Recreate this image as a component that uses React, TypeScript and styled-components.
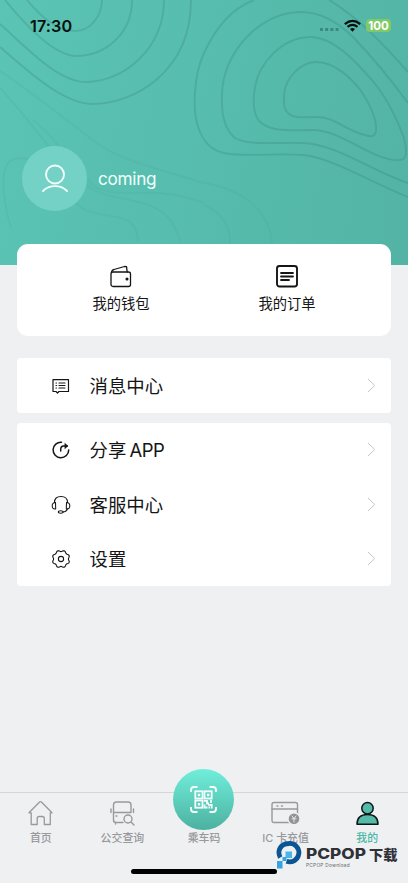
import React from "react";
import styled, { createGlobalStyle } from "styled-components";

const GlobalStyle = createGlobalStyle`
  * { box-sizing: border-box; }
  body { margin: 0; background: #eff0f2; }
  body, button { font-family: Inter, "Noto Sans CJK SC", sans-serif; }
  button { border: 0; padding: 0; background: none; color: inherit; }
  svg { display: block; overflow: visible; flex: none; }
`;

const Screen = styled.div`
  width: 408px;
  height: 883px;
  overflow: hidden;
  display: flex;
  flex-direction: column;
  background: #eff0f2;
  color: #151515;
`;

const Hero = styled.header`
  position: relative;
  height: 265px;
  flex: none;
  background: linear-gradient(100deg, #5bc4b4 0%, #57bdae 45%, #53b4a5 100%);
`;

const Contours = styled.svg`
  position: absolute;
  inset: 0;
  fill: none;
  stroke: #317e78;
  stroke-width: 1.9;
`;

const HeroContent = styled.div`
  position: relative;
`;

const StatusBar = styled.div`
  height: 51px;
  padding: 0 17px 0 30px;
  display: flex;
  align-items: center;
  color: #06110f;
`;

const Clock = styled.time`
  flex: 1;
  font-size: 16.2px;
  font-weight: 600;
  letter-spacing: 0.1px;
`;

const Signal = styled.svg`
  margin-right: 5px;
`;

const Battery = styled.span`
  width: 25px;
  height: 13px;
  margin-left: 5px;
  border-radius: 4px;
  background: #7fca67;
  color: #fff;
  font-size: 11.5px;
  font-weight: 700;
  line-height: 14px;
  text-align: center;
`;

const Profile = styled.div`
  margin: 95px 0 0 22px;
  display: flex;
  align-items: center;
  gap: 11px;
  color: #f2fffc;
  font-size: 17.2px;
  letter-spacing: -0.3px;
`;

const Avatar = styled.div`
  width: 65px;
  height: 65px;
  border-radius: 50%;
  background: #74d1c5;
  display: grid;
  place-items: center;
`;

const Shortcuts = styled.section`
  position: relative;
  height: 92px;
  margin: -21px 17px 0;
  padding: 0 21px;
  border-radius: 11px;
  background: #fff;
  display: grid;
  grid-template-columns: 1fr 1fr;
  flex: none;
`;

const Shortcut = styled.button`
  padding-top: 20px;
  display: flex;
  flex-direction: column;
  align-items: center;
  gap: 6px;
  font-size: 14.3px;
  line-height: 20px;
`;

const Card = styled.section<{ $gap: number }>`
  margin: ${(p) => p.$gap}px 17px 0;
  border-radius: 4px;
  background: #fff;
  flex: none;
`;

const MenuRow = styled.button<{ $height: number }>`
  width: 100%;
  height: ${(p) => p.$height}px;
  padding: 1px 15px 0 34px;
  display: flex;
  align-items: center;
  font-size: 18.4px;
  text-align: left;
`;

const MenuLabel = styled.span`
  flex: 1;
  margin-left: 18.5px;
  line-height: 24px;
  word-spacing: -2px;
`;

const Latin = styled.span`
  letter-spacing: -0.5px;
`;

const TabBar = styled.nav`
  position: relative;
  height: 91px;
  margin-top: auto;
  border-top: 1px solid #d5d6d9;
  display: grid;
  grid-template-columns: repeat(5, 81.6px);
  flex: none;
`;

const Tab = styled.button<{ $active?: boolean }>`
  height: 54px;
  padding-top: 6px;
  display: flex;
  flex-direction: column;
  align-items: center;
  gap: 2.5px;
  color: ${(p) => (p.$active ? "#4cb7a6" : "#98999c")};
  font-size: 10.9px;
  font-weight: 500;
  line-height: 16px;
  white-space: nowrap;
`;

const ScanButton = styled.span`
  width: 61px;
  height: 61px;
  margin-top: -30px;
  margin-bottom: -3px;
  border-radius: 50%;
  background: linear-gradient(#70eedb, #4cb1a0);
  display: grid;
  place-items: center;
  flex: none;
`;

const HomeIndicator = styled.div`
  position: absolute;
  left: 131px;
  bottom: 9px;
  width: 146px;
  height: 5px;
  border-radius: 3px;
  background: #000;
`;

const Watermark = styled.div`
  position: absolute;
  left: 275px;
  top: 46px;
  display: flex;
  gap: 3px;
  color: #303238;
`;

const WatermarkText = styled.div`
  padding-top: 6px;
`;

const Brand = styled.div`
  display: flex;
  align-items: center;
  height: 18px;
`;

const BrandChinese = styled.span`
  margin: -1px 0 0 3px;
  font-family: "Noto Sans CJK SC", sans-serif;
  font-size: 14.2px;
  font-weight: 900;
  line-height: 18px;
`;

const BrandLatin = styled.svg`
  width: 60px;
  height: 18px;
`;

const Tagline = styled.div`
  height: 6px;
  margin-top: -1px;
  font-size: 4.8px;
  line-height: 6px;
  letter-spacing: 0.25px;
  color: #66686d;
`;

const stroke = {
  fill: "none",
  stroke: "currentColor",
  strokeLinecap: "round",
  strokeLinejoin: "round",
} as const;

const HeroPattern = () => (
  <Contours width="408" height="265" viewBox="0 0 408 265">
    <g opacity=".26">
      <path d="M27 0C45 22 60 31 75 31C92 31 102 14 102 0" />
      <path d="M5 0C27 27 55 56 76 56C105 56 132 34 132 0" />
      <path d="M0 24C24 45 57 82 86 82C124 82 164 48 164 0" />
      <path d="M0 47C27 70 63 104 92 104C134 104 191 72 191 0" />
      <path d="M254 0C232 8 216 27 204 53C194 75 191 112 200 132C208 151 222 154 236 154.500C261 156 278 153 303 155C333 158 370 182 408 197" />
      <path d="M408 103C389 77 374 59 354 38C339 23 321 12 301 12C258 12 222 55 222 95C221 117 225 130 235 138C249 146 280 142 302 143C337 144 371 171 408 183" />
      <path d="M309 37C333 36 356 62 372 80C389 100 398 122 404 138C408 153 406 160 400 160C373 162 341 129 312 130C280 131 268 130 259 121C252 112 253 99 255 87C259 63 282 38 309 37Z" />
      <path d="M317 62C335 62 353 80 361 91C369 103 377 119 376 131C375 137 371 137 365 135C346 131 335 117 318 117C304 117 294 119 288 113C283 109 284 101 284 94C286 77 301 62 317 62Z" />
      <path d="M329 0C358 17 385 46 408 72" />
    </g>
    <g opacity=".07">
      <path d="M0 71C31 91 61 116 94 141C120 161 159 169 204 183" />
      <path d="M0 88C30 120 50 153 85 184C116 209 166 188 180 241" />
      <path d="M33 120C56 137 69 163 95 187C124 201 151 183 204 203" />
      <path d="M11 228C0 190 2 168 10 161C38 147 50 184 82 208C105 222 137 207 138 242" />
      <path d="M204 183C241 189 270 209 272 244M204 205C221 212 231 226 230 244" />
    </g>
  </Contours>
);

const WifiIcon = () => (
  <svg width="17" height="12" viewBox="0 0 17 12" {...stroke} strokeWidth="2.2" strokeLinecap="butt">
    <path d="M.8 4.100Q8.500-2.300 16.200 4.100M3.500 6.900Q8.500 2.900 13.500 6.900" />
    <path d="M6 9Q8.500 7 11 9L8.500 11.700Z" fill="currentColor" stroke="none" />
  </svg>
);

const UserIcon = () => (
  <svg width="26" height="29" viewBox="0 0 26 29" {...stroke} strokeWidth="1.900">
    <circle cx="13" cy="10.500" r="9" /><path d="M1 27C7 20.500 19 20.500 25 27" />
  </svg>
);

const WalletIcon = () => (
  <svg width="22" height="24" viewBox="0 0 22 24" {...stroke} strokeWidth="1.300">
    <rect x="1" y="8" width="19.500" height="14.500" rx="2" />
    <path d="M1.500 8Q2 6 4 5.500L14.500 2.500L16.500 2.700L17.200 8" />
    <circle cx="17" cy="15" r=".9" fill="currentColor" />
  </svg>
);

const OrderIcon = () => (
  <svg width="22" height="24" viewBox="0 0 22 24" {...stroke} strokeWidth="1.900">
    <rect x="1" y="2" width="20" height="20.500" rx="2.500" />
    <path d="M5 9H17M5 12.500H17M5 16H13" strokeWidth="1.800" />
  </svg>
);

const MessageIcon = () => (
  <svg width="20" height="20" viewBox="0 0 20 20" {...stroke} strokeWidth="1.200">
    <path d="M2 3.700H17.500V15.500H8L6.500 17L5 15.500H2ZM8 7H14M8 9.500H14M8 12H14M5 7H5.500M5 9.500H5.500M5 12H5.500" />
  </svg>
);

const ShareIcon = () => (
  <svg width="20" height="20" viewBox="0 0 20 20" {...stroke} strokeWidth="1.500">
    <path d="M10.500 2.200A7.800 7.800 0 1 0 17.700 10M9.700 11V9.500Q9.700 6 12.700 6H16" />
    <path d="M14 3.500L17 6L14 8.500Z" fill="currentColor" strokeWidth=".5" />
  </svg>
);

const SupportIcon = () => (
  <svg width="20" height="20" viewBox="0 0 20 20" {...stroke} strokeWidth="1.050">
    <path d="M3.500 7.500Q3.500 1.500 10 1.500T16.500 7.500M16.500 14Q15 17 12 17" />
    <path d="M4.500 7.500L4.700 14Q1.200 14.500 1.200 10.800Q1.200 7.500 4.500 7.500ZM15.500 7.500L15.300 14Q18.800 14.500 18.800 10.800Q18.800 7.500 15.500 7.500Z" />
    <ellipse cx="9.700" cy="17" rx="2.400" ry="1.200" />
  </svg>
);

const gearOutline =
  Array.from({ length: 96 }, (_, i) => {
    const angle = (i * Math.PI) / 48;
    const radius = 8.1 + 0.7 * Math.cos(8 * angle + Math.PI);
    const x = 10 + radius * Math.cos(angle);
    const y = 10 + radius * Math.sin(angle);
    return `${i === 0 ? "M" : "L"}${x.toFixed(2)} ${y.toFixed(2)}`;
  }).join("") + "Z";

const SettingsIcon = () => (
  <svg width="20" height="20" viewBox="0 0 20 20" {...stroke} strokeWidth="1.100">
    <path d={gearOutline} />
    <circle cx="10" cy="10" r="2.600" />
  </svg>
);

const Chevron = () => (
  <svg width="9" height="14" viewBox="0 0 9 14" fill="none" stroke="#c6c6c8" strokeWidth="1">
    <path d="M1 0L7.700 6.500L1 13" />
  </svg>
);

const HomeIcon = () => (
  <svg width="27" height="28" viewBox="0 0 27 28" {...stroke} strokeWidth="1.300">
    <path d="M2 13.800L12.600 3Q13.500 2.200 14.400 3L25 13.800H23.300V25.500H17.300V19.500Q17.300 17.500 15.300 17.500H12.200Q10.200 17.500 10.200 19.500V25.500H4.200V13.800Z" />
  </svg>
);

const BusIcon = () => (
  <svg width="27" height="28" viewBox="0 0 27 28" {...stroke} strokeWidth="1.400">
    <path d="M14 23.500H7Q4.500 23.500 4.500 21V6Q4.500 3 7.500 3H19Q22 3 22 6V13.500M4.500 13.500H22M2 10V13.500M24.500 10V13.500M6.500 24V25M7 17H8" />
    <circle cx="19" cy="20" r="4" /><path d="M22 23L25 26" />
  </svg>
);

const CardIcon = () => (
  <svg width="28" height="28" viewBox="0 0 28 28" {...stroke} strokeWidth="1.400">
    <rect x="0" y="3.500" width="25.500" height="20" rx="2" />
    <path d="M0 10H25.500M5 7H6M9.500 7H10.500" />
    <circle cx="22" cy="19.800" r="6" fill="#929397" stroke="#eff0f2" />
    <path d="M20 17L22 19.500L24 17M20 19.800H24M22 19.800V23" stroke="#eff0f2" strokeWidth=".9" />
  </svg>
);

const MineIcon = () => (
  <svg width="25" height="28" viewBox="0 0 25 28" {...stroke} strokeWidth="1.500" stroke="#101516" fill="#54bba9">
    <path d="M2 25.300Q2 15.500 12.500 15.500T23 25.300Z" />
    <circle cx="12.500" cy="9.200" r="5.700" />
  </svg>
);

const QrIcon = () => (
  <svg width="27" height="27" viewBox="0 0 27 27" fill="none" stroke="#f4fffd" strokeWidth="1.800">
    <path d="M1 6V4Q1 1 4 1H7.500M19.500 1H23Q26 1 26 4V6M1 21V23Q1 26 4 26H7.500M19.500 26H23Q26 26 26 23V21" />
    <rect x="5.300" y="5.300" width="7.200" height="7.200" /><rect x="14.500" y="5.300" width="7.200" height="7.200" />
    <rect x="5.300" y="14.500" width="7.200" height="7.200" />
    <path d="M7.800 9H10.200M17 9H19.400M7.800 18.200H10.200" strokeWidth="2.400" />
    <path d="M13.700 14.800H17V17.500H19M21 13.800V17M14.500 18.500V21.500H17.500M18 18.800H21.700V22.500M18.500 21.500H20" />
  </svg>
);

const BrandLogo = () => (
  <svg width="28" height="30" viewBox="0 0 28 30">
    <path d="M5.300 18.500C1.500 11.500 6 4.500 14 4.500A9.200 9.200 0 1 1 11.500 22.300" fill="none" stroke="#0c5595" strokeWidth="4.800" />
    <path d="M10.500 12.500H17V19H10.500Z" fill="#48b5eb" />
    <path d="M2 22H7.500V29.500H2ZM7.500 18H11.500V22H7.500Z" fill="#36a4e0" />
  </svg>
);

const menu = [
  { label: <>分享 <Latin>APP</Latin></>, Icon: ShareIcon, id: "share" },
  { label: "客服中心", Icon: SupportIcon, id: "support" },
  { label: "设置", Icon: SettingsIcon, id: "settings" },
];

export default function App() {
  return (
    <>
      <GlobalStyle />
      <Screen>
        <Hero>
          <HeroPattern />
          <HeroContent>
            <StatusBar>
              <Clock>17:30</Clock>
              <Signal width="19" height="3" viewBox="0 0 19 3" fill="#3a8a80">
                <path d="M0 0h3v3H0zM5.200 0h3v3h-3zM10.400 0h3v3h-3zM15.600 0h3v3h-3z" transform="translate(0 4)" />
              </Signal>
              <WifiIcon />
              <Battery>100</Battery>
            </StatusBar>
            <Profile>
              <Avatar><UserIcon /></Avatar>
              <span>coming</span>
            </Profile>
          </HeroContent>
        </Hero>
        <Shortcuts>
          <Shortcut><WalletIcon />我的钱包</Shortcut>
          <Shortcut><OrderIcon />我的订单</Shortcut>
        </Shortcuts>
        <Card $gap={22}>
          <MenuRow $height={55}><MessageIcon /><MenuLabel>消息中心</MenuLabel><Chevron /></MenuRow>
        </Card>
        <Card $gap={9.5}>
          {menu.map(({ id, label, Icon }) => (
            <MenuRow key={id} $height={54.6}><Icon /><MenuLabel>{label}</MenuLabel><Chevron /></MenuRow>
          ))}
        </Card>
        <TabBar>
          <Tab><HomeIcon />首页</Tab>
          <Tab><BusIcon />公交查询</Tab>
          <Tab><ScanButton><QrIcon /></ScanButton>乘车码</Tab>
          <Tab><CardIcon />IC 卡充值</Tab>
          <Tab $active><MineIcon />我的</Tab>
          <HomeIndicator />
          <Watermark>
            <BrandLogo />
            <WatermarkText>
              <Brand>
                <BrandLatin viewBox="0 0 60 18">
                  <text x="0" y="14" textLength="60" lengthAdjust="spacingAndGlyphs" fontSize="15" fontWeight="800" fill="currentColor">PCPOP</text>
                </BrandLatin>
                <BrandChinese>下载</BrandChinese>
              </Brand>
              <Tagline>PCPOP Download</Tagline>
            </WatermarkText>
          </Watermark>
        </TabBar>
      </Screen>
    </>
  );
}
